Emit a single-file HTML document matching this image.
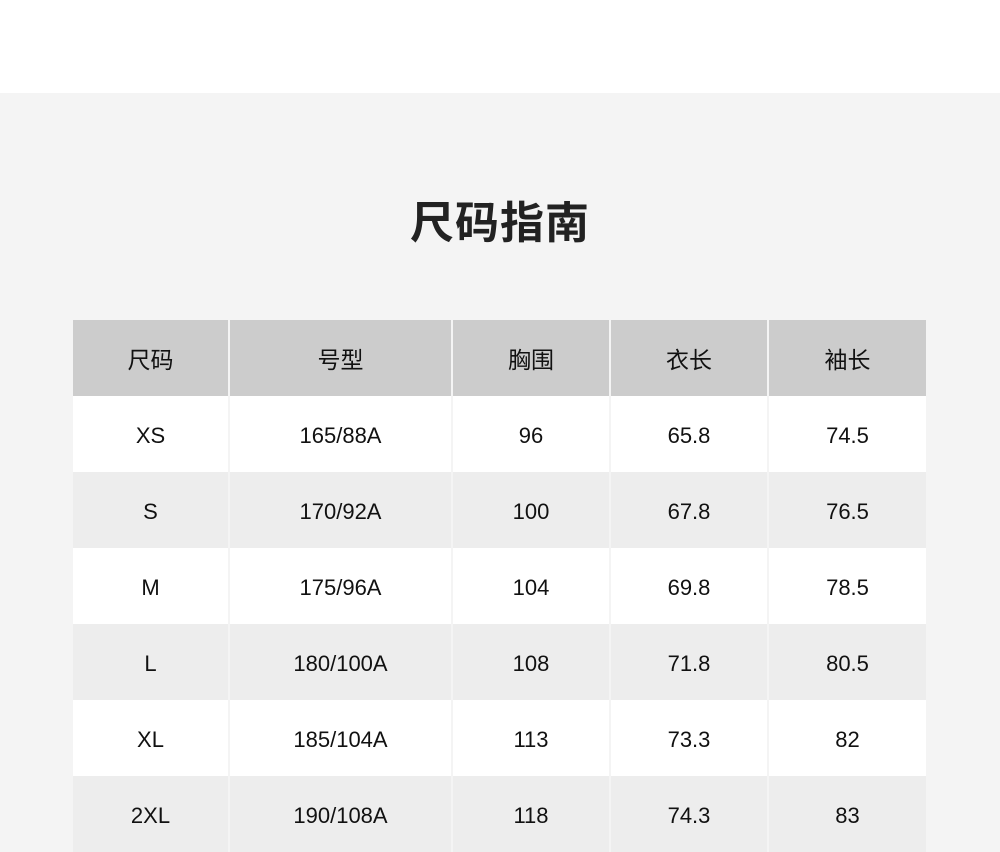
<!DOCTYPE html>
<html><head><meta charset="utf-8"><style>
*{margin:0;padding:0;box-sizing:border-box}
body{width:1000px;height:852px;overflow:hidden;background:#f4f4f4;font-family:"Liberation Sans","Noto Sans CJK SC",sans-serif;color:#111}
.top{position:absolute;left:0;top:0;width:1000px;height:93px;background:#fff}
h1{position:absolute;left:0;top:194px;width:1000px;text-align:center;font-size:44px;font-weight:700;color:#222;line-height:60px;letter-spacing:1px}
.tbl{position:absolute;left:73px;top:320px;width:853px}
.row{display:flex;height:76px;gap:2px}
.row div{display:flex;align-items:center;justify-content:center;font-size:22px;background:#fff;padding-top:3px}
.row.h div{background:#cccccc;font-weight:400;font-size:23px;padding-top:0}
.row.g div{background:#ededed}
.c1{width:155px}.c2{width:221px}.c3{width:156px}.c4{width:156px}.c5{width:157px}
</style></head><body>
<div class="top"></div>
<h1>尺码指南</h1>
<div class="tbl">
<div class="row h"><div class="c1">尺码</div><div class="c2">号型</div><div class="c3">胸围</div><div class="c4">衣长</div><div class="c5">袖长</div></div>
<div class="row"><div class="c1">XS</div><div class="c2">165/88A</div><div class="c3">96</div><div class="c4">65.8</div><div class="c5">74.5</div></div>
<div class="row g"><div class="c1">S</div><div class="c2">170/92A</div><div class="c3">100</div><div class="c4">67.8</div><div class="c5">76.5</div></div>
<div class="row"><div class="c1">M</div><div class="c2">175/96A</div><div class="c3">104</div><div class="c4">69.8</div><div class="c5">78.5</div></div>
<div class="row g"><div class="c1">L</div><div class="c2">180/100A</div><div class="c3">108</div><div class="c4">71.8</div><div class="c5">80.5</div></div>
<div class="row"><div class="c1">XL</div><div class="c2">185/104A</div><div class="c3">113</div><div class="c4">73.3</div><div class="c5">82</div></div>
<div class="row g"><div class="c1">2XL</div><div class="c2">190/108A</div><div class="c3">118</div><div class="c4">74.3</div><div class="c5">83</div></div>
</div>
</body></html>
